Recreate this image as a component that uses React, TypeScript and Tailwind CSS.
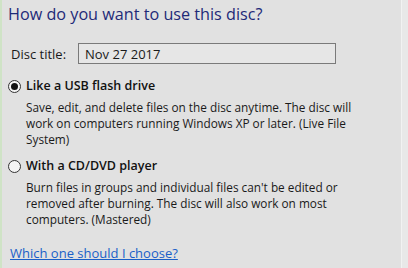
import { useState } from "react";

type Option = {
  id: string;
  label: string;
  lines: string[];
};

const options: Option[] = [
  {
    id: "usb",
    label: "Like a USB flash drive",
    lines: [
      "Save, edit, and delete files on the disc anytime. The disc will",
      "work on computers running Windows XP or later. (Live File",
      "System)",
    ],
  },
  {
    id: "cd",
    label: "With a CD/DVD player",
    lines: [
      "Burn files in groups and individual files can't be edited or",
      "removed after burning. The disc will also work on most",
      "computers. (Mastered)",
    ],
  },
];

function Radio({ checked }: { checked: boolean }) {
  return (
    <span className="flex h-[13px] w-[13px] shrink-0 items-center justify-center rounded-full border border-[#333] bg-[#f4f4f4]">
      {checked && <span className="h-[7px] w-[7px] rounded-full bg-[#111]" />}
    </span>
  );
}

export default function App() {
  const [selected, setSelected] = useState("usb");
  const [title, setTitle] = useState("Nov 27 2017");

  return (
    <div
      className="flex h-[268px] w-[408px] overflow-hidden border-l-2 border-[#cfe3c6] bg-[#e1e1e1] text-[#1a1a1a]"
      style={{ fontFamily: '"Open Sans", "Noto Sans", sans-serif' }}
    >
      <div className="flex flex-1 flex-col pl-[6px] pt-[2px]">
        <h1 className="text-[16.2px] leading-[24px] font-normal text-[#1e2a78]">
          How do you want to use this disc?
        </h1>

        {/* ディスクタイトル */}
        <div className="mt-[17px] flex items-center">
          <label className="w-[70px] pl-[3px] text-[13px] leading-[20px]">Disc title:</label>
          <input
            value={title}
            onChange={(e) => setTitle(e.target.value)}
            className="h-[21px] w-[258px] border border-[#7a7a7a] bg-[#e6e6e6] px-[6px] text-[13px] text-[#1a1a1a] outline-none"
          />
        </div>

        {/* 使い方の選択肢 */}
        <div className="mt-[13px] flex flex-col gap-[10px]">
          {options.map((o) => (
            <div key={o.id} className="flex flex-col" onClick={() => setSelected(o.id)}>
              <div className="flex items-center gap-[5px]">
                <Radio checked={selected === o.id} />
                <span className="text-[12.5px] leading-[18px] font-semibold text-[#111]">{o.label}</span>
              </div>
              <div className="pl-[18px] pt-[4px] text-[11.8px] leading-[16px]">
                {o.lines.map((l) => (
                  <div key={l} className="whitespace-nowrap">
                    {l}
                  </div>
                ))}
              </div>
            </div>
          ))}
        </div>

        <a href="#" className="mt-[17px] pl-[2px] text-[13px] leading-[18px] text-[#1a5fc8] underline">
          Which one should I choose?
        </a>
      </div>
      <div className="w-[7px] border-l border-[#f2f2f2] bg-[#e8e8e8]" />
    </div>
  );
}
